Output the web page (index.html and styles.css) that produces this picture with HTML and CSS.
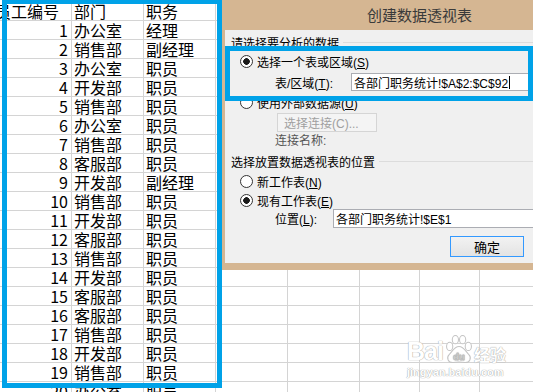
FILE: index.html
```html
<!DOCTYPE html>
<html lang="zh-CN">

<head>
  <meta charset="UTF-8" />
  <meta name="viewport" content="width=device-width, initial-scale=1.0" />
  <title>创建数据透视表</title>
  <link rel="stylesheet" href="styles.css">
</head>

<body>
  <div class="sheet">
    <div class="row"><div class="lead">员工编号</div><div>部门</div><div>职务</div><div></div><div></div><div></div><div></div><div></div></div>
    <div class="row"><div class="num">1</div><div>办公室</div><div>经理</div><div></div><div></div><div></div><div></div><div></div></div>
    <div class="row"><div class="num">2</div><div>销售部</div><div>副经理</div><div></div><div></div><div></div><div></div><div></div></div>
    <div class="row"><div class="num">3</div><div>办公室</div><div>职员</div><div></div><div></div><div></div><div></div><div></div></div>
    <div class="row"><div class="num">4</div><div>开发部</div><div>职员</div><div></div><div></div><div></div><div></div><div></div></div>
    <div class="row"><div class="num">5</div><div>销售部</div><div>职员</div><div></div><div></div><div></div><div></div><div></div></div>
    <div class="row"><div class="num">6</div><div>办公室</div><div>职员</div><div></div><div></div><div></div><div></div><div></div></div>
    <div class="row"><div class="num">7</div><div>销售部</div><div>职员</div><div></div><div></div><div></div><div></div><div></div></div>
    <div class="row"><div class="num">8</div><div>客服部</div><div>职员</div><div></div><div></div><div></div><div></div><div></div></div>
    <div class="row"><div class="num">9</div><div>开发部</div><div>副经理</div><div></div><div></div><div></div><div></div><div></div></div>
    <div class="row"><div class="num">10</div><div>销售部</div><div>职员</div><div></div><div></div><div></div><div></div><div></div></div>
    <div class="row"><div class="num">11</div><div>开发部</div><div>职员</div><div></div><div></div><div></div><div></div><div></div></div>
    <div class="row"><div class="num">12</div><div>客服部</div><div>职员</div><div></div><div></div><div></div><div></div><div></div></div>
    <div class="row"><div class="num">13</div><div>销售部</div><div>职员</div><div></div><div></div><div></div><div></div><div></div></div>
    <div class="row"><div class="num">14</div><div>开发部</div><div>职员</div><div></div><div></div><div></div><div></div><div></div></div>
    <div class="row"><div class="num">15</div><div>客服部</div><div>职员</div><div></div><div></div><div></div><div></div><div></div></div>
    <div class="row"><div class="num">16</div><div>客服部</div><div>职员</div><div></div><div></div><div></div><div></div><div></div></div>
    <div class="row"><div class="num">17</div><div>销售部</div><div>职员</div><div></div><div></div><div></div><div></div><div></div></div>
    <div class="row"><div class="num">18</div><div>开发部</div><div>职员</div><div></div><div></div><div></div><div></div><div></div></div>
    <div class="row"><div class="num">19</div><div>销售部</div><div>职员</div><div></div><div></div><div></div><div></div><div></div></div>
    <div class="row"><div class="num">20</div><div>办公室</div><div>职员</div><div></div><div></div><div></div><div></div><div></div></div>
  </div>

  <div class="dialog">
    <div class="dialog-title">创建数据透视表</div>
    <div class="dialog-body">
      <div class="group">请选择要分析的数据</div>
      <div class="option opt-range"><span class="radio checked"></span><span>选择一个表或区域(<u>S</u>)</span></div>
      <div class="field field-range">
        <label>表/区域(<u>T</u>):</label>
        <div class="input">各部门职务统计!$A$2:$C$92<span class="caret"></span></div>
      </div>
      <div class="option opt-external"><span class="radio"></span><span>使用外部数据源(<u>U</u>)</span></div>
      <div class="btn-row"><span class="btn disabled">选择连接(C)...</span></div>
      <div class="conn-name">连接名称:</div>
      <div class="group group-place">选择放置数据透视表的位置</div>
      <div class="option opt-new"><span class="radio"></span><span>新工作表(<u>N</u>)</span></div>
      <div class="option opt-existing"><span class="radio checked"></span><span>现有工作表(<u>E</u>)</span></div>
      <div class="field field-place">
        <label>位置(<u>L</u>):</label>
        <div class="input">各部门职务统计!$E$1</div>
      </div>
      <div class="ok-row"><span class="btn primary">确定</span></div>
    </div>
  </div>

  <div class="mark mark-sheet"></div>
  <div class="mark mark-range"></div>

  <div class="watermark">
    <div class="wm-logo">
      <span class="wm-bai">Bai</span>
      <svg class="wm-paw" width="28" height="29" viewBox="0 0 27 28">
        <ellipse cx="4.5" cy="11" rx="3" ry="4" />
        <ellipse cx="10" cy="4.5" rx="3" ry="4" />
        <ellipse cx="17" cy="4.5" rx="3" ry="4" />
        <ellipse cx="22.5" cy="11" rx="3" ry="4" />
        <path d="M13.5 11 C9 11 7 16 4 19 C1 22 3 27 8 26.5 C11 26 16 26 19 26.5 C24 27 26 22 23 19 C20 16 18 11 13.5 11 Z" />
        <text x="13.5" y="24" text-anchor="middle">du</text>
      </svg>
      <span class="wm-jy">经验</span>
    </div>
    <div class="wm-url">jingyan.baidu.com</div>
  </div>
</body>

</html>
```

FILE: styles.css
```css
html,
body {
  margin: 0;
}

body {
  position: relative;
  width: 533px;
  height: 392px;
  overflow: hidden;
  background: #fff;
  font-family: "Noto Sans CJK SC", sans-serif;
  color: #000;
}

/* spreadsheet */

.sheet {
  padding-top: 2px;
}

.row {
  display: grid;
  grid-template-columns: 72px 72px 72px 72px 72px 60px 60px 60px;
  height: 19px;
}

.row > div {
  border-right: 1px solid #d4d4d4;
  border-bottom: 1px solid #d4d4d4;
  padding-left: 2px;
  font-size: 16px;
  line-height: 18px;
  white-space: nowrap;
}

.row .num {
  text-align: right;
  padding-right: 3px;
}

.row .lead {
  padding-left: 0;
  text-indent: -5px;
  overflow: hidden;
}

/* dialog */

.dialog {
  position: absolute;
  left: 222px;
  top: 0;
  width: 330px;
  height: 270px;
  background: #d5b692;
  font-family: "Liberation Sans", "Noto Sans CJK SC", sans-serif;
  font-size: 12px;
}

.dialog-title {
  height: 30px;
  line-height: 30px;
  padding-left: 145px;
  font-family: "Noto Sans CJK SC", sans-serif;
  font-size: 15px;
  color: #3a3a3a;
}

.dialog-body {
  display: flex;
  flex-direction: column;
  box-sizing: border-box;
  margin-left: 3px;
  height: 233px;
  padding-top: 4px;
  background: #f0f0f0;
}

.group {
  display: flex;
  align-items: center;
  height: 16px;
  padding-left: 6px;
  white-space: nowrap;
}

.group::after {
  content: "";
  flex: 1;
  height: 1px;
  margin-left: 4px;
  background: #dcdcdc;
}

.group-place {
  height: 22px;
}

.option {
  display: flex;
  align-items: center;
  gap: 4px;
  padding-left: 15px;
  white-space: nowrap;
}

.opt-range {
  height: 22px;
}

.opt-external {
  height: 22px;
}

.opt-new {
  height: 19px;
}

.opt-existing {
  height: 18px;
}

.radio {
  box-sizing: border-box;
  width: 13px;
  height: 13px;
  border: 1px solid #333;
  border-radius: 50%;
  background: #fff;
}

.radio.checked {
  background: radial-gradient(circle, #1a1a1a 0 3px, #fff 3.6px);
}

.field {
  display: flex;
  align-items: center;
  padding-left: 50px;
  white-space: nowrap;
}

.field-range {
  height: 18px;
  margin-top: 1px;
}

.field-range label {
  width: 76px;
}

.field-place {
  height: 19px;
}

.field-place label {
  width: 58px;
}

.input {
  flex: 1;
  box-sizing: border-box;
  height: 100%;
  padding-left: 2px;
  border: 1px solid #abadb3;
  border-right: 0;
  background: #fff;
  display: flex;
  align-items: center;
}

.caret {
  width: 1px;
  height: 13px;
  margin-left: 1px;
  background: #000;
}

.btn-row {
  height: 19px;
  padding-left: 52px;
}

.btn {
  display: flex;
  align-items: center;
  justify-content: center;
  box-sizing: border-box;
  height: 100%;
}

.btn.disabled {
  width: 100px;
  border: 1px solid #d5d5d5;
  background: #f4f4f4;
  color: #a0a0a0;
  justify-content: flex-start;
  padding-left: 6px;
}

.conn-name {
  height: 18px;
  line-height: 18px;
  padding-left: 50px;
  color: #555;
}

.ok-row {
  height: 21px;
  margin-top: 8px;
  padding-left: 225px;
}

.btn.primary {
  width: 74px;
  border: 1px solid #3399ff;
  background: linear-gradient(#f2f2f2, #e3e3e3);
  font-size: 13px;
}

/* annotation frames */

.mark {
  position: absolute;
  box-sizing: border-box;
  border: 5px solid #00a2e8;
}

.mark-sheet {
  left: 2px;
  top: -1px;
  width: 220px;
  height: 389px;
}

.mark-range {
  left: 225px;
  top: 46px;
  width: 308px;
  height: 55px;
}

/* watermark */

.watermark {
  position: absolute;
  left: 407px;
  top: 333px;
  color: #fff;
  text-shadow: 0 0 1px #9a9a9a, 0 0 1px #bdbdbd;
  font-family: "Liberation Sans", sans-serif;
  font-weight: bold;
}

.wm-logo {
  display: flex;
  align-items: flex-end;
  height: 31px;
}

.wm-bai {
  font-size: 25px;
  line-height: 25px;
  letter-spacing: -1px;
}

.wm-paw {
  margin: 0 1px 0 2px;
}

.wm-paw ellipse,
.wm-paw path {
  fill: #fff;
  stroke: #c4c4c4;
  stroke-width: 1;
}

.wm-paw text {
  font-size: 9px;
  font-weight: bold;
  fill: #fff;
  stroke: #c4c4c4;
  stroke-width: 0.4;
}

.wm-jy {
  font-family: "Noto Sans CJK SC", sans-serif;
  font-size: 16px;
  line-height: 20px;
}

.wm-url {
  margin-top: 2px;
  font-size: 11px;
  line-height: 12px;
}
```
